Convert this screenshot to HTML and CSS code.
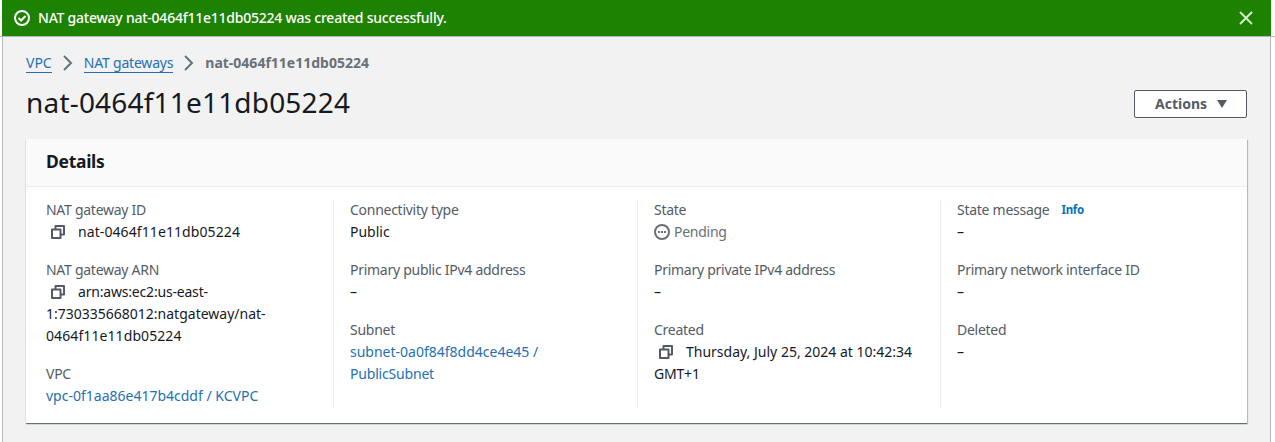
FILE: index.html
```html
<!DOCTYPE html>
<html lang="en">
<head>
<meta charset="utf-8">
<title>NAT gateway details</title>
<link rel="stylesheet" href="styles.css">
</head>
<body>
<svg class="defs" width="0" height="0">
  <symbol id="copy" viewBox="0 0 16 16"><path d="M2 5.5h8.5V14H2zM5.500 5.500V2H14v8.500h-3.500" fill="none" stroke="currentColor" stroke-width="2" stroke-linejoin="round"/></symbol>
</svg>
<div class="app">
  <div class="flash">
    <svg class="icon" viewBox="0 0 16 16"><circle cx="8" cy="8" r="7"/><path d="M4.5 8l2.6 2.5 4.4-4.5"/></svg>
    <span class="flash-text">NAT gateway nat-0464f11e11db05224 was created successfully.</span>
    <svg class="icon close" viewBox="0 0 16 16"><path d="M2 2l12 12M14 2L2 14"/></svg>
  </div>
  <main class="content">
    <nav class="crumbs">
      <a href="#" class="crumb-vpc">VPC</a>
      <svg class="chevron" viewBox="0 0 16 16"><path d="M4 1l7 7-7 7"/></svg>
      <a href="#" class="crumb-nat">NAT gateways</a>
      <svg class="chevron" viewBox="0 0 16 16"><path d="M4 1l7 7-7 7"/></svg>
      <span class="current">nat-0464f11e11db05224</span>
    </nav>
    <header class="title-row">
      <h1><span>nat-0464f11e11db05224</span></h1>
      <button class="actions"><span>Actions</span><svg viewBox="0 0 16 16"><path d="M3 4h10l-5 8z"/></svg></button>
    </header>
    <section class="card">
      <div class="card-head"><h2><span>Details</span></h2></div>
      <div class="columns">
        <div class="column">
          <dl><dt><span>NAT gateway ID</span></dt><dd><svg class="copy"><use href="#copy"/></svg><span class="wide">nat-0464f11e11db05224</span></dd></dl>
          <dl><dt><span>NAT gateway ARN</span></dt><dd><svg class="copy"><use href="#copy"/></svg><span class="tight">arn:aws:ec2:us-east-</span><br><span>1:730335668012:natgateway/nat-</span><br><span class="wide">0464f11e11db05224</span></dd></dl>
          <dl><dt><span>VPC</span></dt><dd><a href="#">vpc-0f1aa86e417b4cddf / KCVPC</a></dd></dl>
        </div>
        <div class="column">
          <dl><dt><span>Connectivity type</span></dt><dd><span>Public</span></dd></dl>
          <dl><dt><span>Primary public IPv4 address</span></dt><dd>–</dd></dl>
          <dl><dt><span>Subnet</span></dt><dd><a href="#">subnet-0a0f84f8dd4ce4e45 /<br><span class="tight">PublicSubnet</span></a></dd></dl>
        </div>
        <div class="column">
          <dl><dt><span>State</span></dt><dd class="pending"><svg class="icon" viewBox="0 0 16 16"><circle cx="8" cy="8" r="7"/><path d="M4 8h2M7 8h2M10 8h2"/></svg><span>Pending</span></dd></dl>
          <dl><dt><span>Primary private IPv4 address</span></dt><dd>–</dd></dl>
          <dl><dt><span>Created</span></dt><dd><svg class="copy"><use href="#copy"/></svg><span>Thursday, July 25, 2024 at 10:42:34</span><br><span class="tight">GMT+1</span></dd></dl>
        </div>
        <div class="column">
          <dl><dt class="with-info"><span>State message</span><a class="info" href="#">Info</a></dt><dd>–</dd></dl>
          <dl><dt><span>Primary network interface ID</span></dt><dd>–</dd></dl>
          <dl><dt><span>Deleted</span></dt><dd>–</dd></dl>
        </div>
      </div>
    </section>
  </main>
</div>
</body>
</html>
```
FILE: styles.css
```css
* { box-sizing: border-box; }
body { margin: 0; height: 442px; overflow: hidden; background: #fff; color: #16191f; font: 14px/22px "Noto Sans", "Open Sans", sans-serif; }
a { color: #2470b3; text-decoration: none; }
h1, h2, dl, dd { margin: 0; }
.defs { display: none; }
.app { height: 442px; background: linear-gradient(#b5b8b8, #b5b8b8) 0 36px / 100% 1px no-repeat; padding: 0 4px 0 2px; }
.icon { width: 16px; height: 16px; fill: none; stroke: currentColor; stroke-width: 2; flex: none; }
.flash { display: flex; align-items: center; height: 36px; padding: 0 17px 0 12px; background: #1d8102; color: #fff; font-weight: 500; }
.flash-text { margin-left: 8px; letter-spacing: -.235px; }
.close { margin-left: auto; stroke-width: 1.8; color: #d9f3d4; }
.content { height: 406px; padding: 15px 23px 0; border: 1px solid #b5b8b8; border-bottom: 0; background: #f2f2f2; }
.crumbs { display: flex; align-items: center; height: 22px; }
.crumbs a { line-height: 18px; border-bottom: 1px solid #2470b3; }
.crumb-nat { letter-spacing: -.19px; }
.chevron { width: 16px; height: 16px; margin: 0 8px; fill: none; stroke: #687078; stroke-width: 2; }
.current { color: #687078; font-weight: 700; }
.title-row { display: flex; justify-content: space-between; align-items: flex-start; height: 65px; padding-top: 16px; }
h1 { margin-top: -6px; font-size: 28px; line-height: 36px; font-weight: 400; letter-spacing: .19px; }
.actions { display: flex; align-items: center; width: 113px; height: 28px; padding: 0 16px 0 20px; border: 1px solid #545b64; border-radius: 2px; background: #fff; color: #545b64; font: 700 14px/22px "Noto Sans", sans-serif; }
.actions svg { width: 16px; height: 16px; margin-left: auto; fill: currentColor; }
.card { height: 284px; background: #fff; box-shadow: 0 1px 1px #001c2480, 1px 1px 1px #001c2430; }
.card-head { height: 48px; padding: 11px 20px; background: #fafafa; border-bottom: 1px solid #eaeded; }
h2 { font-size: 17.5px; line-height: 22px; font-weight: 700; letter-spacing: -.3px; }
.columns { display: grid; grid-template-columns: 287px 304px 303px 307px; height: 208px; margin: 13px 0 0 20px; }
.column { display: flex; flex-direction: column; gap: 16px; border-left: 1px solid #eaeded; padding-left: 16px; }
.column:first-child { border: 0; padding: 0; }
.column dl:first-child { margin-top: -1px; }
dt { color: #545b64; height: 22px; letter-spacing: -.27px; }
dd { min-height: 22px; }
.wide { letter-spacing: .09px; }
.tight { letter-spacing: -.19px; }
.copy { width: 16px; height: 16px; margin: 0 12px 0 4px; vertical-align: -3px; color: #545b64; }
.pending { display: flex; align-items: center; gap: 4px; color: #687078; letter-spacing: -.27px; }
.with-info { display: flex; }
.info { margin-left: 12px; color: #0073bb; font-size: 11.5px; font-weight: 700; }
```
